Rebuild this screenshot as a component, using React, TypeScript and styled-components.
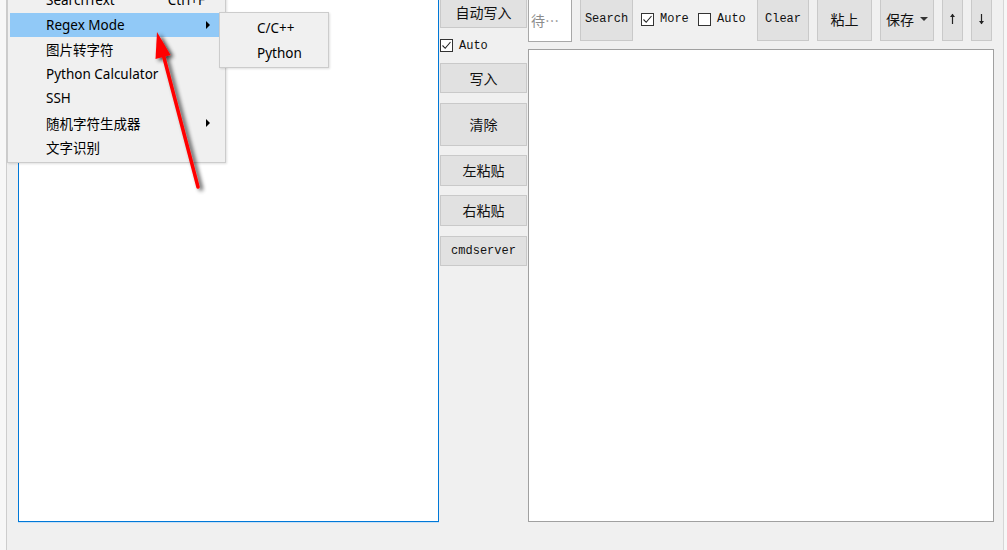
import React from "react";
import styled, { createGlobalStyle } from "styled-components";

const GlobalStyle = createGlobalStyle`
  html, body {
    margin: 0;
    padding: 0;
    background: #f7f7f7;
    overflow: hidden;
  }
`;

const Screen = styled.div`
  position: relative;
  width: 1007px;
  height: 550px;
  overflow: hidden;
  font-family: "Noto Sans", "Noto Sans CJK SC", sans-serif;
  color: #000;
`;

const Window = styled.div`
  display: flex;
  align-items: flex-start;
  gap: 1px;
  box-sizing: border-box;
  margin: -3px 0 0 6px;
  width: 998px;
  height: 556px;
  padding-left: 11px;
  background: #f0f0f0;
  border-left: 1px solid #cdcdcd;
  border-right: 1px solid #d6d6d6;
`;

const LeftEditor = styled.div`
  box-sizing: border-box;
  width: 421px;
  height: 525px;
  background: #fff;
  border: 1px solid #0078d7;
  box-shadow: 0 1px 0 #c7e0f6;
`;

const MiddleColumn = styled.div`
  display: flex;
  flex-direction: column;
  width: 87px;
`;

const Button = styled.button<{ $h: number; $mt?: number; $w?: number; $mono?: boolean }>`
  box-sizing: border-box;
  display: flex;
  align-items: center;
  justify-content: center;
  gap: 6px;
  width: ${(p) => (p.$w ? `${p.$w}px` : "100%")};
  height: ${(p) => p.$h}px;
  margin: ${(p) => p.$mt ?? 0}px 0 0 0;
  padding: 0 0 1px 0;
  flex-shrink: 0;
  background: #e1e1e1;
  border: 1px solid #c9c9c9;
  color: #111;
  font-family: ${(p) =>
    p.$mono
      ? `"Liberation Mono", "DejaVu Sans Mono", monospace`
      : `"Noto Sans CJK SC", "Noto Sans", sans-serif`};
  font-size: ${(p) => (p.$mono ? "12px" : "14px")};
  line-height: 1;
`;

const CheckRow = styled.label<{ $mt?: number; $w?: number; $h?: number }>`
  display: flex;
  align-items: center;
  gap: 6px;
  flex-shrink: 0;
  width: ${(p) => (p.$w ? `${p.$w}px` : "auto")};
  height: ${(p) => p.$h ?? 13}px;
  margin-top: ${(p) => p.$mt ?? 0}px;
  font-family: "Liberation Mono", "DejaVu Sans Mono", monospace;
  font-size: 12px;
  color: #111;
`;

const Box = styled.span`
  box-sizing: border-box;
  display: flex;
  align-items: center;
  justify-content: center;
  width: 13px;
  height: 13px;
  background: #fff;
  border: 1px solid #333;
`;

const RightColumn = styled.div`
  display: flex;
  flex-direction: column;
  width: 466px;
`;

const Toolbar = styled.div`
  display: flex;
  align-items: flex-start;
  gap: 8px;
  height: 44px;
`;

const Field = styled.div`
  box-sizing: border-box;
  display: flex;
  align-items: center;
  width: 44px;
  height: 45px;
  padding-left: 2px;
  background: #fff;
  border: 1px solid #a8a8a8;
  color: #8c8c8c;
  font-family: "Noto Sans CJK SC", sans-serif;
  font-size: 14px;
`;

const RightEditor = styled.div`
  box-sizing: border-box;
  margin-top: 8px;
  height: 473px;
  background: #fff;
  border: 1px solid #a0a0a0;
`;

const Menu = styled.div<{ $left: number; $top: number; $w: number }>`
  position: absolute;
  left: ${(p) => p.$left}px;
  top: ${(p) => p.$top}px;
  width: ${(p) => p.$w}px;
  box-sizing: border-box;
  padding: 2px;
  background: #f0f0f0;
  border: 1px solid #cccccc;
  box-shadow: 1px 1px 2px rgba(0, 0, 0, 0.12);
  font-family: "Noto Sans", "Noto Sans CJK SC", sans-serif;
  font-size: 13.5px;
`;

const MenuItem = styled.div<{ $active?: boolean; $h?: number; $pl?: number }>`
  display: flex;
  align-items: center;
  height: ${(p) => p.$h ?? 24.5}px;
  padding: 0 13px 0 ${(p) => p.$pl ?? 36}px;
  background: ${(p) => (p.$active ? "#91c9f7" : "transparent")};
  color: #000;
  white-space: nowrap;
`;

const ItemLabel = styled.span`
  flex: 1;
`;

const Shortcut = styled.span`
  margin-right: 5px;
`;

const SubArrow = styled.span`
  width: 0;
  height: 0;
  border-top: 4px solid transparent;
  border-bottom: 4px solid transparent;
  border-left: 4px solid #000;
`;

const Caret = styled.span`
  width: 0;
  height: 0;
  border-left: 4px solid transparent;
  border-right: 4px solid transparent;
  border-top: 4px solid #333;
`;

const Overlay = styled.svg`
  position: absolute;
  left: 0;
  top: 0;
  pointer-events: none;
`;

function Check({ checked }: { checked?: boolean }) {
  return (
    <Box>
      {checked && (
        <svg width="11" height="11" viewBox="0 0 11 11">
          <path d="M1.5 5.5 L4.2 8.3 L9.5 2" fill="none" stroke="#222" strokeWidth="1.1" />
        </svg>
      )}
    </Box>
  );
}

function ArrowGlyph({ up }: { up?: boolean }) {
  return (
    <svg width="7" height="12" viewBox="0 0 7 12">
      <g transform={up ? undefined : "rotate(180 3.5 6)"}>
        <path d="M3.5 1 L3.5 11" stroke="#222" strokeWidth="1.2" />
        <path d="M1 4 L3.5 0.8 L6 4 Z" fill="#222" />
      </g>
    </svg>
  );
}

export default function App() {
  return (
    <>
      <GlobalStyle />
      <Screen>
        <Window>
          <LeftEditor />
          <MiddleColumn>
            <Button $h={31}>自动写入</Button>
            <CheckRow $mt={11}>
              <Check checked />
              Auto
            </CheckRow>
            <Button $h={30} $mt={11}>写入</Button>
            <Button $h={43} $mt={10}>清除</Button>
            <Button $h={31} $mt={9}>左粘贴</Button>
            <Button $h={31} $mt={9}>右粘贴</Button>
            <Button $h={30} $mt={10} $mono>cmdserver</Button>
          </MiddleColumn>
          <RightColumn>
            <Toolbar>
              <Field>待…</Field>
              <Button $h={44} $w={53} $mono>Search</Button>
              <CheckRow $w={49} $h={44}>
                <Check checked />
                More
              </CheckRow>
              <CheckRow $w={51} $h={44}>
                <Check />
                Auto
              </CheckRow>
              <Button $h={44} $w={52} $mono>Clear</Button>
              <Button $h={44} $w={55}>粘上</Button>
              <Button $h={44} $w={54}>
                保存
                <Caret />
              </Button>
              <Button $h={44} $w={21}>
                <ArrowGlyph up />
              </Button>
              <Button $h={44} $w={21}>
                <ArrowGlyph />
              </Button>
            </Toolbar>
            <RightEditor />
          </RightColumn>
        </Window>

        <Menu $left={7} $top={-15} $w={219}>
          <MenuItem>
            <ItemLabel>SearchText</ItemLabel>
            <Shortcut>Ctrl+F</Shortcut>
          </MenuItem>
          <MenuItem $active>
            <ItemLabel>Regex Mode</ItemLabel>
            <SubArrow />
          </MenuItem>
          <MenuItem>
            <ItemLabel>图片转字符</ItemLabel>
          </MenuItem>
          <MenuItem>
            <ItemLabel>Python Calculator</ItemLabel>
          </MenuItem>
          <MenuItem>
            <ItemLabel>SSH</ItemLabel>
          </MenuItem>
          <MenuItem>
            <ItemLabel>随机字符生成器</ItemLabel>
            <SubArrow />
          </MenuItem>
          <MenuItem>
            <ItemLabel>文字识别</ItemLabel>
          </MenuItem>
        </Menu>

        <Menu $left={219} $top={12} $w={110}>
          <MenuItem $h={25} $pl={35}>C/C++</MenuItem>
          <MenuItem $h={25} $pl={35}>Python</MenuItem>
        </Menu>

        <Overlay width="1007" height="550" viewBox="0 0 1007 550">
          <defs>
            <filter id="arrowShadow" x="-50%" y="-20%" width="200%" height="140%">
              <feGaussianBlur in="SourceAlpha" stdDeviation="2.2" />
              <feOffset dx="3" dy="2" result="blur" />
              <feComponentTransfer>
                <feFuncA type="linear" slope="0.75" />
              </feComponentTransfer>
              <feMerge>
                <feMergeNode />
                <feMergeNode in="SourceGraphic" />
              </feMerge>
            </filter>
          </defs>
          <g filter="url(#arrowShadow)">
            <path d="M198 187 L162 50" stroke="#f00" strokeWidth="3.5" strokeLinecap="round" />
            <path d="M157 32 L170.5 55 L155.5 59 Z" fill="#f00" />
          </g>
        </Overlay>
      </Screen>
    </>
  );
}
